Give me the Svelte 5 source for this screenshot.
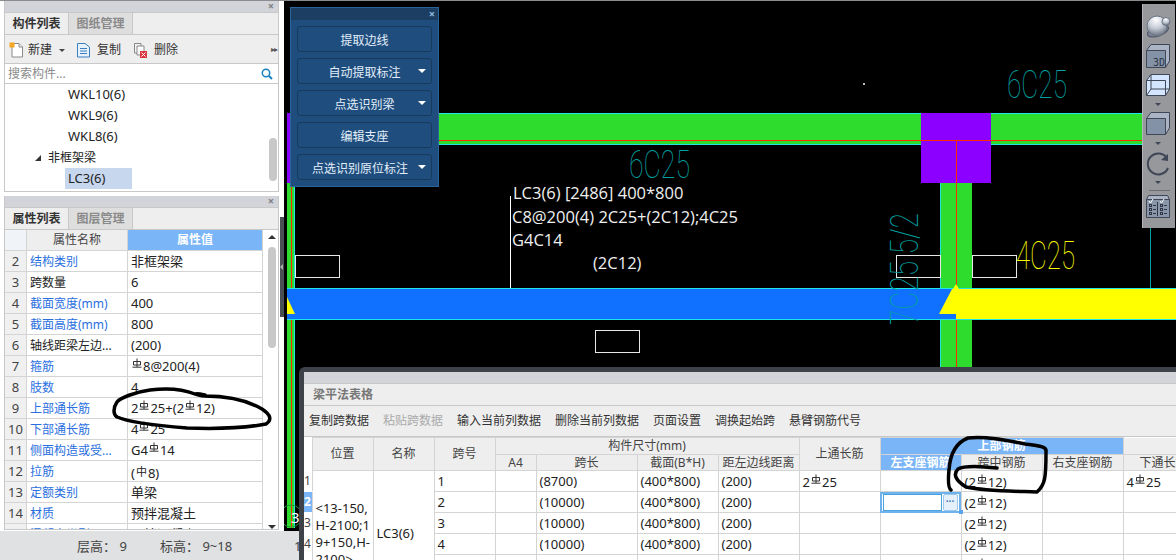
<script>
  const tree = [
    { t: 'WKL10(6)', cls: 'leaf' },
    { t: 'WKL9(6)', cls: 'leaf' },
    { t: 'WKL8(6)', cls: 'leaf' },
    { t: '非框架梁', cls: 'group' },
    { t: 'LC3(6)', cls: 'leaf sel' }
  ];
  const props = [
    [2, '结构类别', '非框架梁', 1], [3, '跨数量', '6', 0], [4, '截面宽度(mm)', '400', 1],
    [5, '截面高度(mm)', '800', 1], [6, '轴线距梁左边...', '(200)', 0], [7, '箍筋', '#8@200(4)', 1],
    [8, '肢数', '4', 1], [9, '上部通长筋', '2#25+(2#12)', 1], [10, '下部通长筋', '4#25', 1],
    [11, '侧面构造或受...', 'G4#14', 1], [12, '拉筋', '', 1], [13, '定额类别', '单梁', 1],
    [14, '材质', '预拌混凝土', 1], [15, '混凝土类型', '预拌混凝土', 1]
  ];
  const spans = [
    [1, '(8700)', '2#25', '(2#12)', '4#25'],
    [2, '(10000)', '', '(2#12)', ''],
    [3, '(10000)', '', '(2#12)', ''],
    [4, '(10000)', '', '(2#12)', ''],
    [5, '(10000)', '', '(2#12)', ''],
    [6, '(10000)', '', '(2#12)', '']
  ];
  const actions = ['复制跨数据', '粘贴跨数据', '输入当前列数据', '删除当前列数据', '页面设置', '调换起始跨', '悬臂钢筋代号'];
  const tools = [
    { t: '提取边线' }, { t: '自动提取标注', m: 1 }, { t: '点选识别梁', m: 1 },
    { t: '编辑支座' }, { t: '点选识别原位标注', m: 1, long: 1 }
  ];
  const cols = [8, 61, 61, 61, 41, 101, 81, 81, 81, 81, 81, 81, 81];
</script>

{#snippet steel(text)}
  {#each text.split('#') as part, i}{#if i > 0}<svg class="steel" viewBox="0 0 10 10"><path d="M5 0.5V9M1.5 3.5H8.5V7H1.5ZM0.5 9.2H9.5" /></svg>{/if}{part}{/each}
{/snippet}

<div class="page">
  <div class="topline"></div>
  <div class="work">
    <aside class="side">
      <section class="panel first">
        <div class="grip"><span>×</span></div>
        <div class="tabs"><b class="on">构件列表</b><b class="off">图纸管理</b></div>
        <div class="bar">
          <svg class="ic" viewBox="0 0 15 16"><path d="M3 1.5H10L13.5 5V15H3Z" fill="#fff" stroke="#8a8a8a"/><path d="M10 1.5V5H13.5" fill="#eee" stroke="#8a8a8a"/><rect x="0.5" y="0.5" width="5" height="5" fill="#f5a623"/></svg>
          <span class="lb">新建</span><i class="caret"></i>
          <svg class="ic second" viewBox="0 0 15 16"><path d="M1.5 1.5H9L13.5 5V15H1.5Z" fill="#e8f2fb" stroke="#3b7fc0"/><path d="M4 6.500H11M4 9H11M4 11.500H11" stroke="#3b7fc0"/></svg>
          <span class="lb wide">复制</span>
          <svg class="ic third" viewBox="0 0 15 16"><path d="M1.5 1.500H8V11H1.500Z" fill="#f4f4f4" stroke="#888"/><path d="M4 4H11V13H4Z" fill="#fff" stroke="#888"/><rect x="7" y="9" width="7" height="7" fill="#d9363e"/><path d="M8.500 10.500L12.500 14.500M12.500 10.500L8.500 14.500" stroke="#fff"/></svg>
          <span class="lb wide">删除</span>
          <span class="more">▸▸</span>
        </div>
        <div class="search">
          <span>搜索构件...</span>
          <svg viewBox="0 0 12 12"><circle cx="5" cy="5" r="3.700" fill="none" stroke="#1a7fc0" stroke-width="1.500"/><path d="M8 8L11 11" stroke="#1a7fc0" stroke-width="2"/></svg>
        </div>
        <ul class="tree">
          {#each tree as n}
            <li class={n.cls}><span>{n.t}</span></li>
          {/each}
          <i class="thumb"></i>
        </ul>
      </section>

      <section class="panel second-panel">
        <div class="grip"><span>×</span></div>
        <div class="tabs"><b class="on">属性列表</b><b class="off">图层管理</b></div>
        <div class="props">
          <div class="ptable">
            <div class="prow head"><span class="n"></span><span class="k">属性名称</span><span class="v">属性值</span></div>
            {#each props as p}
              <div class="prow">
                <span class="n">{p[0]}</span>
                <span class="k" class:link={p[3]}>{p[1]}</span>
                <span class="v">{#if p[0] === 12}(<span class="phi">中</span>8){:else}{@render steel(p[2])}{/if}</span>
              </div>
            {/each}
          </div>
          <div class="pscroll"><i class="up"></i><i class="bar-thumb"></i><i class="down"></i></div>
        </div>
      </section>

      <div class="handle"><i></i></div>

      <footer class="status"><span class="a">层高： 9</span><span class="b">标高： 9~18</span><span class="c">1</span></footer>
    </aside>

    <main class="canvas">
      <svg class="cad" viewBox="284 1 892 559">
        <rect x="438" y="113" width="706" height="32" fill="#2ddc2d"/>
        <path d="M438 113.500H1144M438 144.500H1144" stroke="#1fe5e5"/>
        <path d="M438 140.500H1144" stroke="#ff2a00"/>
        <rect x="940" y="183" width="32" height="190" fill="#2ddc2d"/>
        <path d="M940.500 183V373" stroke="#1fe5e5"/>
        <rect x="921" y="113" width="70" height="70" fill="#8c00ff"/>
        <path d="M921 140.500H991M956.500 140V373" stroke="#ff2a00"/>

        <rect x="287" y="113" width="3" height="70" fill="#8c00ff"/>
        <rect x="287" y="183" width="8" height="345" fill="#2ddc2d"/>
        <path d="M291.500 183V528" stroke="#ff2a00"/>
        <path d="M294.500 183V528" stroke="#1fe5e5"/>
        <circle cx="291" cy="516" r="11" fill="none" stroke="#1c9c3c"/>

        <rect x="287" y="288" width="889" height="32" fill="#1070ff"/>
        <path d="M287 288.500H1176M287 319.500H1176" stroke="#1fe5e5"/>
        <polygon points="952,289 1176,289 1176,319 956,319 956,314 939,314" fill="#ffff00"/>
        <polygon points="956,284 959,289 953,289" fill="#ffff00"/>
        <polygon points="287,297 287,314 295,314" fill="#ffff00"/>
        <path d="M1150.500 225V288" stroke="#00a0a0"/>

        <g fill="none" stroke="#e8e8e8">
          <rect x="295.500" y="255.500" width="44" height="22"/>
          <rect x="896.500" y="255.500" width="44" height="22"/>
          <rect x="972.500" y="255.500" width="44" height="22"/>
          <rect x="595.500" y="330.500" width="44" height="22"/>
        </g>
        <path d="M510.500 196V288" stroke="#fff"/>

        <g class="cadtext teal">
          <text x="1007" y="98" textLength="60" lengthAdjust="spacingAndGlyphs">6C25</text>
          <text x="629" y="178" textLength="61" lengthAdjust="spacingAndGlyphs">6C25</text>
          <text transform="translate(918 325) rotate(-90)" textLength="112" lengthAdjust="spacingAndGlyphs">7C25 5/2</text>
        </g>
        <g class="cadtext yellow">
          <text x="1016" y="269" textLength="59" lengthAdjust="spacingAndGlyphs">4C25</text>
        </g>
        <g class="note">
          <text x="513" y="199">LC3(6) [2486] 400*800</text>
          <text x="512" y="223">C8@200(4) 2C25+(2C12);4C25</text>
          <text x="512" y="246">G4C14</text>
          <text x="593" y="269">(2C12)</text>
        </g>
        <circle cx="864" cy="84" r="1" fill="#fff"/>
        <text x="291" y="523" class="three">3</text>
      </svg>

      <div class="floater">
        <div class="ftitle"><span>×</span></div>
        <div class="fbody">
          {#each tools as t}
            <button class:long={t.long}>{t.t}{#if t.m}<i></i>{/if}</button>
          {/each}
        </div>
      </div>

      <div class="viewbar">
        <svg viewBox="1142 4 33 224">
          <defs>
            <radialGradient id="ball" cx="0.45" cy="0.2" r="0.85"><stop offset="0" stop-color="#fff"/><stop offset="0.5" stop-color="#c4cad6"/><stop offset="1" stop-color="#5b6474"/></radialGradient>
          </defs>
          <ellipse cx="1158" cy="31" rx="11" ry="5" fill="#7c8698" stroke="#4a5262" transform="rotate(-20 1158 31)"/>
          <circle cx="1157" cy="26" r="10" fill="url(#ball)" stroke="#6b7484"/>
          <circle cx="1166" cy="21.500" r="4" fill="url(#ball)" stroke="#6b7484"/>
          <g stroke="#3f4757" stroke-linejoin="round">
            <path d="M1146.500 50.500H1165.500V67.500H1146.500Z" fill="#8492a8"/>
            <path d="M1146.500 50.500L1151 44.500H1169.500V61L1165.500 67.500V50.500Z" fill="#aab4c4"/>
            <path d="M1146.500 80.500H1165.500V95.500H1146.500Z" fill="#d4e6ff"/>
            <path d="M1146.500 80.500L1151 74.500H1169.500V89L1165.500 95.500V80.500Z" fill="#d4e6ff"/>
            <path d="M1151 74.500V89H1169.500M1151 89L1146.500 95.500" fill="none"/>
            <path d="M1146.500 118.500H1165.500V134.500H1146.500Z" fill="#8492a8"/>
            <path d="M1146.500 118.500L1151 112.500H1169.500V128L1165.500 134.500V118.500Z" fill="#aab4c4"/>
            <path d="M1146.500 199.500H1169.500V217.500H1146.500Z" fill="#8a97ab"/>
            <path d="M1148.500 195.500H1167.500L1169.500 199.500H1146.500Z" fill="#aab4c4"/>
          </g>
          <text x="1153" y="66" class="td">3D</text>
          <path d="M1167 158A10.500 10.500 0 1 0 1168 168" fill="none" stroke="#3f4757" stroke-width="2"/>
          <path d="M1161 160L1168 161L1168 154Z" fill="#3f4757"/>
          <g fill="#3f4757">
            <polygon points="1155,103 1161,103 1158,106"/>
            <polygon points="1155,142 1161,142 1158,145"/>
            <polygon points="1155,181 1161,181 1158,184"/>
          </g>
          <path d="M1149 190.500H1170" stroke="#6a6d72"/>
          <path d="M1157.500 202V216" stroke="#2f3747"/>
          <g fill="none" stroke="#2f3747">
            <rect x="1149.500" y="204.500" width="2" height="2"/><rect x="1149.500" y="208.500" width="2" height="2"/><rect x="1149.500" y="212.500" width="2" height="2"/>
            <rect x="1160.500" y="204.500" width="2" height="2"/><rect x="1160.500" y="208.500" width="2" height="2"/><rect x="1160.500" y="212.500" width="2" height="2"/>
            <path d="M1153 205.500H1156M1153 209.500H1156M1153 213.500H1156M1164 205.500H1167M1164 209.500H1167M1164 213.500H1167"/>
            <path d="M1149 201L1150.500 203L1153 199M1160 201L1161.500 203L1164 199" stroke="#fff"/>
          </g>
        </svg>
      </div>

      <div class="window">
        <div class="wgrip"></div>
        <div class="wtitle">梁平法表格</div>
        <div class="wbar">
          {#each actions as a, i}<span class:dim={i === 1}>{a}</span>{/each}
        </div>
        <table>
          <colgroup>{#each cols as c}<col style="width:{c}px" />{/each}</colgroup>
          <thead>
            <tr class="h1">
              <th class="blank" rowspan="2"></th>
              <th rowspan="2">位置</th><th rowspan="2">名称</th><th rowspan="2">跨号</th>
              <th colspan="4">构件尺寸(mm)</th>
              <th rowspan="2">上通长筋</th>
              <th colspan="3" class="hot">上部钢筋</th>
              <th class="plain"></th>
            </tr>
            <tr class="h2">
              <th>A4</th><th>跨长</th><th>截面(B*H)</th><th>距左边线距离</th>
              <th class="hot">左支座钢筋</th><th>跨中钢筋</th><th>右支座钢筋</th><th>下通长筋</th>
            </tr>
          </thead>
          <tbody>
            {#each spans as s, i}
              <tr>
                <td class="rn" class:cur={i === 1}>{s[0]}</td>
                {#if i === 0}
                  <td rowspan="6" class="pos">&lt;13-150,<br />H-2100;1<br />9+150,H-<br />2100&gt;</td>
                  <td rowspan="6" class="nm">LC3(6)</td>
                {/if}
                <td>{s[0]}</td>
                <td></td>
                <td>{s[1]}</td>
                <td>(400*800)</td>
                <td>(200)</td>
                <td>{@render steel(s[2])}</td>
                <td class:edit={i === 1}>
                  {#if i === 1}
                    <span class="editor"><span class="inp"></span><span class="dots">···</span></span>
                    <i class="fill"></i>
                  {/if}
                </td>
                <td>{@render steel(s[3])}</td>
                <td></td>
                <td>{@render steel(s[4])}</td>
              </tr>
            {/each}
          </tbody>
        </table>
      </div>
    </main>

    <svg class="ink" viewBox="0 0 1176 560">
      <path d="M205 395C195 393 197 394 195 394C180 388 165 388 150 390C135 392 120 398 117 402C113 408 113 414 117 417C128 422 150 425 187 428C215 429 245 428 266 424C272 420 271 415 262 409C245 399 225 396 205 396C201 396 199 395 195 394"/>
      <path d="M997 468C980 466 965 465 958 469C953 474 955 480 966 487C985 491 1005 491 1037 492C1045 485 1046 478 1046 452C1047 447 1042 446 1025 444C1005 440 985 436 968 438C955 443 950 455 949 470C948 480 948 488 951 490"/>
    </svg>
  </div>
</div>

<style>
  :global(body) { margin: 0; background: #fff; }
  .page { width: 1176px; height: 560px; overflow: hidden; font: 12px/1 "Noto Sans", "Noto Sans CJK SC", sans-serif; color: #222; }
  .topline { height: 1px; background: #8a8d90; }
  .work { position: relative; display: flex; height: 559px; }
  .side { position: relative; width: 284px; flex: none; padding-left: 4px; box-sizing: border-box; background: #fff; }
  .panel { width: 275px; box-sizing: border-box; border: 1px solid #c8c8c8; border-top: 0; background: #fff; }
  .first { height: 191px; margin-bottom: 4px; }
  .second-panel { height: 334px; overflow: hidden; }
  .grip { height: 11px; background: #d2d4d9; position: relative; border-bottom: 1px solid #c8c8c8; }
  .grip span { position: absolute; right: 4px; top: -1px; color: #7d8085; font-size: 11px; font-weight: 700; }
  .tabs { display: flex; height: 22px; background: #eee; border-bottom: 1px solid #c8c8c8; box-sizing: border-box; }
  .tabs b { width: 64px; text-align: center; line-height: 21px; border-right: 1px solid #c8c8c8; box-sizing: border-box; font-weight: 700; }
  .tabs .on { color: #333; }
  .tabs .off { background: #dedede; color: #8a8a8a; }
  .bar { display: flex; align-items: center; height: 29px; background: #eee; border-bottom: 1px solid #c8c8c8; box-sizing: border-box; padding: 1px 0 0 4px; position: relative; }
  .ic { width: 15px; height: 16px; flex: none; }
  .lb { margin-left: 4px; color: #333; }
  .lb.wide { margin-left: 6px; }
  .caret { border: 3px solid transparent; border-top: 3px solid #444; margin: 4px 0 0 7px; }
  .second { margin-left: 11px; }
  .third { margin-left: 12px; }
  .more { position: absolute; right: 1px; top: 10px; font-size: 8px; color: #555; letter-spacing: -1px; }
  .search { display: flex; justify-content: space-between; align-items: center; height: 20px; padding: 1px 5px 0 3px; border-bottom: 1px solid #c8c8c8; box-sizing: border-box; color: #8a8a8a; }
  .search svg { width: 12px; height: 12px; }
  .tree { position: relative; list-style: none; margin: 0; padding: 0; }
  .tree li { height: 21px; line-height: 21px; }
  .leaf { padding-left: 63px; font-size: 13px; }
  .leaf span { display: inline-block; height: 21px; }
  .group { padding-left: 43px; position: relative; }
  .group::before { content: ""; position: absolute; left: 30px; top: 8px; border: 3px solid transparent; border-right-color: #333; border-bottom-color: #333; }
  .sel span { background: #c6d7ee; margin-left: -3px; padding-left: 3px; width: 64px; }
  .thumb { position: absolute; right: 1px; top: 54px; width: 8px; height: 43px; border-radius: 4px; background: #c8c8c8; }
  .props { display: flex; }
  .ptable { width: 258px; flex: none; }
  .prow { display: grid; grid-template-columns: 22px 101px 135px; height: 21px; }
  .prow > span { border-right: 1px solid #d4d4d4; border-bottom: 1px solid #d4d4d4; box-sizing: border-box; line-height: 21px; white-space: nowrap; overflow: hidden; }
  .n { text-align: center; background: #f0f0f0; color: #444; font-size: 13px; }
  .k { padding-left: 3px; }
  .v { padding-left: 3px; font-size: 13px; }
  .phi { font-size: 11px; vertical-align: 2px; margin: 0 1px; }
  .link { color: #2a6fe0; }
  .prow.head > span { text-align: center; background: #eee; color: #444; padding: 0; font-size: 12px; line-height: 20px; }
  .prow.head > .n { background: #f0f3f7; }
  .prow.head > .v { background: #7ab6f7; color: #fff; font-weight: 700; }
  .pscroll { position: relative; flex: 1; }
  .up { position: absolute; left: 5px; top: 5px; border: 4px solid transparent; border-top: 0; border-bottom: 4px solid #333; }
  .down { position: absolute; left: 5px; top: 295px; border: 4px solid transparent; border-bottom: 0; border-top: 4px solid #333; }
  .bar-thumb { position: absolute; left: 5px; top: 17px; width: 8px; height: 101px; border-radius: 4px; background: #c8c8c8; }
  .handle { position: absolute; left: 280px; top: 216px; width: 4px; height: 100px; background: #4a4f55; }
  .handle i { position: absolute; left: 0; top: 47px; border: 3px solid transparent; border-left: 0; border-right: 3px solid #aaa; }
  .status { position: absolute; z-index: 2; left: 0; top: 530px; width: 299px; height: 30px; background: #e0e1e3; color: #444; font-size: 13px; line-height: 30px; }
  .status span { position: absolute; white-space: nowrap; }
  .a { left: 77px; }
  .b { left: 160px; }
  .c { left: 294px; }
  .steel { width: 10px; height: 10px; vertical-align: 3px; margin: 0 1px; fill: none; stroke: #333; stroke-width: 1; }

  .canvas { position: relative; flex: 1; background: #000; overflow: hidden; }
  .cad { display: block; width: 892px; height: 559px; }
  .cadtext text { font: 100 38px Roboto, "DejaVu Sans", sans-serif; }
  .teal text { fill: #00a0a0; }
  .yellow text { fill: #ffff00; }
  .note text { font: 16.500px "Open Sans", sans-serif; fill: #f0f0f0; }
  .three { font: 15px "Noto Sans", sans-serif; fill: #fff; }
  .floater { position: absolute; left: 6px; top: 6px; width: 149px; height: 180px; background: #1f4e7e; border: 1px solid #2a6498; box-sizing: border-box; }
  .ftitle { height: 12px; background: #1b3e62; position: relative; }
  .ftitle span { position: absolute; right: 3px; top: 0; color: #8fb8de; font-size: 11px; font-weight: 700; }
  .fbody { display: flex; flex-direction: column; gap: 6px; padding: 6px 6px 0; }
  button { position: relative; height: 26px; padding: 0; border: 1px solid #183a5c; border-radius: 3px; background: #1f4e7e; color: #e4eefa; font: 12px "Noto Sans CJK SC", sans-serif; }
  button.long { padding-right: 9px; }
  button i { position: absolute; right: 5px; top: 10px; border: 4px solid transparent; border-bottom: 0; border-top: 4px solid #fff; }
  .viewbar { position: absolute; left: 858px; top: 3px; width: 33px; height: 224px; background: #96989c; border-left: 1px solid #b4b6ba; box-sizing: border-box; }
  .viewbar svg { display: block; width: 33px; height: 224px; margin-left: -1px; }
  .td { font: 10px "DejaVu Sans Mono", monospace; fill: #2f3747; }

  .window { position: absolute; left: 15px; top: 366px; width: 877px; height: 193px; box-sizing: border-box; border-top: 5px solid #3e4349; border-left: 5px solid #3e4349; border-top-left-radius: 6px; background: #fff; overflow: hidden; }
  .wgrip { height: 12px; background: #d2d4d9; border-bottom: 1px solid #c8c8c8; box-sizing: border-box; }
  .wtitle { height: 22px; padding-left: 9px; line-height: 22px; background: #eee; border-bottom: 1px solid #c8c8c8; box-sizing: border-box; color: #777; font-weight: 700; }
  .wbar { display: flex; gap: 14px; height: 31px; padding-left: 5px; line-height: 29px; background: #eee; border-bottom: 1px solid #c8c8c8; box-sizing: border-box; color: #333; }
  .dim { color: #aaa; }
  table { table-layout: fixed; width: 860px; border-collapse: collapse; }
  th, td { border: 1px solid #d4d4d4; padding: 0; overflow: hidden; white-space: nowrap; }
  th { background: #eee; color: #444; font-weight: 400; text-align: center; font-size: 12px; }
  .h1 th { height: 16px; }
  .h2 th { height: 15px; }
  th.hot { background: #7ab6f7; color: #fff; font-weight: 700; }
  th.blank { background: #fff; border: 0; }
  th.plain { background: #eee; border-top: 0; }
  tbody tr { height: 21px; }
  td { padding-left: 3px; font-size: 13px; color: #222; box-sizing: border-box; height: 21px; }
  .rn { padding: 0; border: 0; border-bottom: 1px solid #fff; color: #444; font-size: 12px; overflow: hidden; background: #fff; }
  .cur { background: #7ab6f7; color: #fff; font-weight: 700; }
  .pos { padding-left: 3px; white-space: normal; line-height: 17px; font-size: 13px; }
  .nm { padding-left: 3px; }
  .edit { position: relative; padding: 0; overflow: visible; outline: 2px solid #6fb3ee; outline-offset: -2px; }
  .editor { display: flex; gap: 1px; height: 17px; margin: 1px 2px 1px 2px; }
  .inp { width: 59px; border: 1px solid #4aa3df; box-sizing: border-box; background: #fff; }
  .dots { flex: 1; margin-right: 1px; border: 1px solid #9cc8ee; border-radius: 2px; box-sizing: border-box; background: #e6f0fb; color: #3a78b8; font-size: 10px; line-height: 13px; text-align: center; font-weight: 700; }
  .fill { position: absolute; right: -2px; bottom: -2px; width: 4px; height: 4px; background: #5aa5ee; }
  .ink { position: absolute; z-index: 5; left: 0; top: -1px; width: 1176px; height: 560px; pointer-events: none; }
  .ink path { fill: none; stroke: #000; stroke-width: 3.500; stroke-linecap: round; stroke-linejoin: round; }
</style>
